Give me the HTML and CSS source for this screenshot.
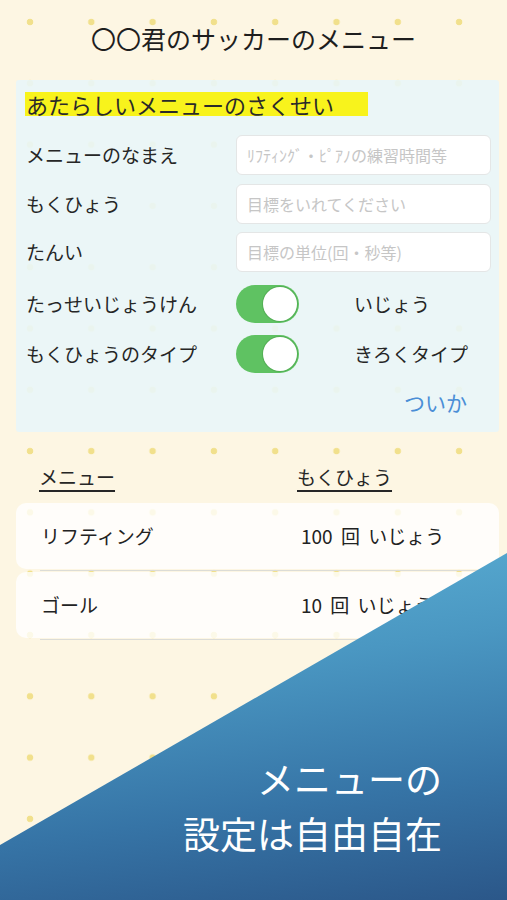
FILE: index.html
```html
<!DOCTYPE html>
<html lang="ja">
<head>
<meta charset="utf-8">
<title>〇〇君のサッカーのメニュー</title>
<link rel="stylesheet" href="styles.css">
</head>
<body>
<div class="screen">
  <h1 class="title">〇〇君のサッカーのメニュー</h1>

  <section class="panel">
    <div class="panel-head"><span class="highlight">あたらしいメニューのさくせい</span></div>
    <div class="fields">
      <div class="field">
        <span class="label">メニューのなまえ</span>
        <input class="input" type="text" placeholder="ﾘﾌﾃｨﾝｸﾞ・ﾋﾟｱﾉの練習時間等">
      </div>
      <div class="field">
        <span class="label">もくひょう</span>
        <input class="input" type="text" placeholder="目標をいれてください">
      </div>
      <div class="field">
        <span class="label">たんい</span>
        <input class="input" type="text" placeholder="目標の単位(回・秒等)">
      </div>
    </div>
    <div class="switches">
      <div class="switch-row">
        <span class="label">たっせいじょうけん</span>
        <span class="switch"><span class="knob"></span></span>
        <span class="switch-text">いじょう</span>
      </div>
      <div class="switch-row">
        <span class="label">もくひょうのタイプ</span>
        <span class="switch"><span class="knob"></span></span>
        <span class="switch-text">きろくタイプ</span>
      </div>
    </div>
    <div class="actions"><span class="add">ついか</span></div>
  </section>

  <div class="table-head">
    <span class="col-a">メニュー</span>
    <span class="col-b">もくひょう</span>
  </div>

  <div class="rows">
    <div class="row">
      <span class="cell-a">リフティング</span>
      <span class="cell-b">100 回 いじょう</span>
    </div>
    <div class="sep"><span class="sep-line"></span></div>
    <div class="row">
      <span class="cell-a">ゴール</span>
      <span class="cell-b">10 回 いじょう</span>
    </div>
    <div class="sep"><span class="sep-line"></span></div>
  </div>

  <div class="banner">
    <p class="banner-text"><span>メニューの</span><span>設定は自由自在</span></p>
  </div>
</div>
</body>
</html>
```

FILE: styles.css
```css
* { box-sizing: border-box; }

html, body {
  margin: 0;
  padding: 0;
}

body {
  width: 507px;
  height: 900px;
  overflow: hidden;
  font-family: "Noto Sans CJK JP", "Noto Sans", sans-serif;
  color: #222;
}

.screen {
  position: relative;
  width: 507px;
  height: 900px;
  overflow: hidden;
  background-color: #fdf6e3;
  background-image: radial-gradient(circle, #f1e08c 0, #f1e08c 3px, rgba(241, 224, 140, 0) 3.6px);
  background-size: 61.3px 61.3px;
  background-position: -0.65px -8.65px;
  display: flex;
  flex-direction: column;
}

.title {
  margin: 0;
  height: 80px;
  line-height: 76px;
  text-align: center;
  font-size: 25px;
  font-weight: 400;
  color: #1e1e1e;
}

.panel {
  margin: 0 8px 0 16px;
  padding: 12px 8px 11px 9px;
  background: rgba(233, 246, 248, 0.9);
  border-radius: 3px;
}

.panel-head {
  height: 24px;
}

.highlight {
  display: inline-block;
  width: 343px;
  height: 24px;
  line-height: 24px;
  font-size: 22px;
  background: #f8f31c;
  color: #2a2a2a;
  padding-left: 1px;
  white-space: nowrap;
}

.fields {
  margin-top: 19px;
  display: flex;
  flex-direction: column;
  gap: 8.5px;
}

.field {
  display: flex;
  align-items: center;
  height: 40px;
}

.label {
  width: 211px;
  padding-left: 1px;
  font-size: 19px;
  line-height: 24px;
  color: #262626;
  flex: none;
}

.input {
  width: 255px;
  height: 40px;
  border: 1px solid #e4e6e6;
  border-radius: 6px;
  background: #fff;
  padding: 0 10px;
  font-family: "Noto Sans CJK JP", "Noto Sans", sans-serif;
  font-size: 16px;
  color: #333;
  outline: none;
}

.input::placeholder {
  color: #c6c6c6;
}

.switches {
  margin-top: 13px;
  display: flex;
  flex-direction: column;
  gap: 12px;
}

.switch-row {
  display: flex;
  align-items: center;
  height: 38px;
}

.switch {
  position: relative;
  width: 63px;
  height: 38px;
  border-radius: 19px;
  background: #5fc262;
  flex: none;
}

.knob {
  position: absolute;
  top: 2px;
  right: 2px;
  width: 34px;
  height: 34px;
  border-radius: 50%;
  background: #fff;
  box-shadow: 0 0 0 1px rgba(60, 140, 60, 0.35);
}

.switch-text {
  margin-left: 55px;
  font-size: 19px;
  line-height: 24px;
  color: #262626;
}

.actions {
  margin-top: 10px;
  height: 38px;
  display: flex;
  justify-content: flex-end;
  align-items: center;
  padding-right: 24px;
}

.add {
  font-size: 21px;
  line-height: 26px;
  color: #4a8ed6;
}

.table-head {
  margin-top: 30px;
  height: 30px;
  display: flex;
  align-items: center;
  padding-left: 39px;
}

.col-a, .col-b {
  font-size: 19px;
  line-height: 24px;
  text-decoration: underline;
  text-underline-offset: 5px;
  text-decoration-thickness: 1.5px;
  color: #262626;
}

.col-a { width: 258px; }

.rows {
  margin: 11px 8px 0 16px;
}

.row {
  height: 66px;
  display: flex;
  align-items: center;
  padding-left: 25px;
  background: rgba(255, 255, 255, 0.8);
  border-radius: 10px;
}

.cell-a {
  width: 260px;
  font-size: 19px;
  line-height: 24px;
  color: #222;
}

.cell-b {
  font-size: 19px;
  line-height: 24px;
  word-spacing: 4px;
  color: #222;
}

.sep {
  height: 3px;
  display: flex;
  align-items: center;
  padding-left: 24px;
}

.sep-line {
  display: block;
  width: 100%;
  height: 1px;
  background: #dcdcd6;
}

.banner {
  position: absolute;
  left: 0;
  top: 553px;
  width: 507px;
  height: 347px;
  clip-path: polygon(100% 0, 100% 100%, 0 100%, 0 292px);
  background: linear-gradient(172deg, #5db2d6 0%, #4a97c2 35%, #3674a6 70%, #2b5789 100%);
}

.banner-text {
  margin: 0;
  padding: 198px 65px 0 0;
  display: flex;
  flex-direction: column;
  align-items: flex-end;
  color: #fff;
  font-size: 37px;
  line-height: 55px;
  font-weight: 400;
}
```
